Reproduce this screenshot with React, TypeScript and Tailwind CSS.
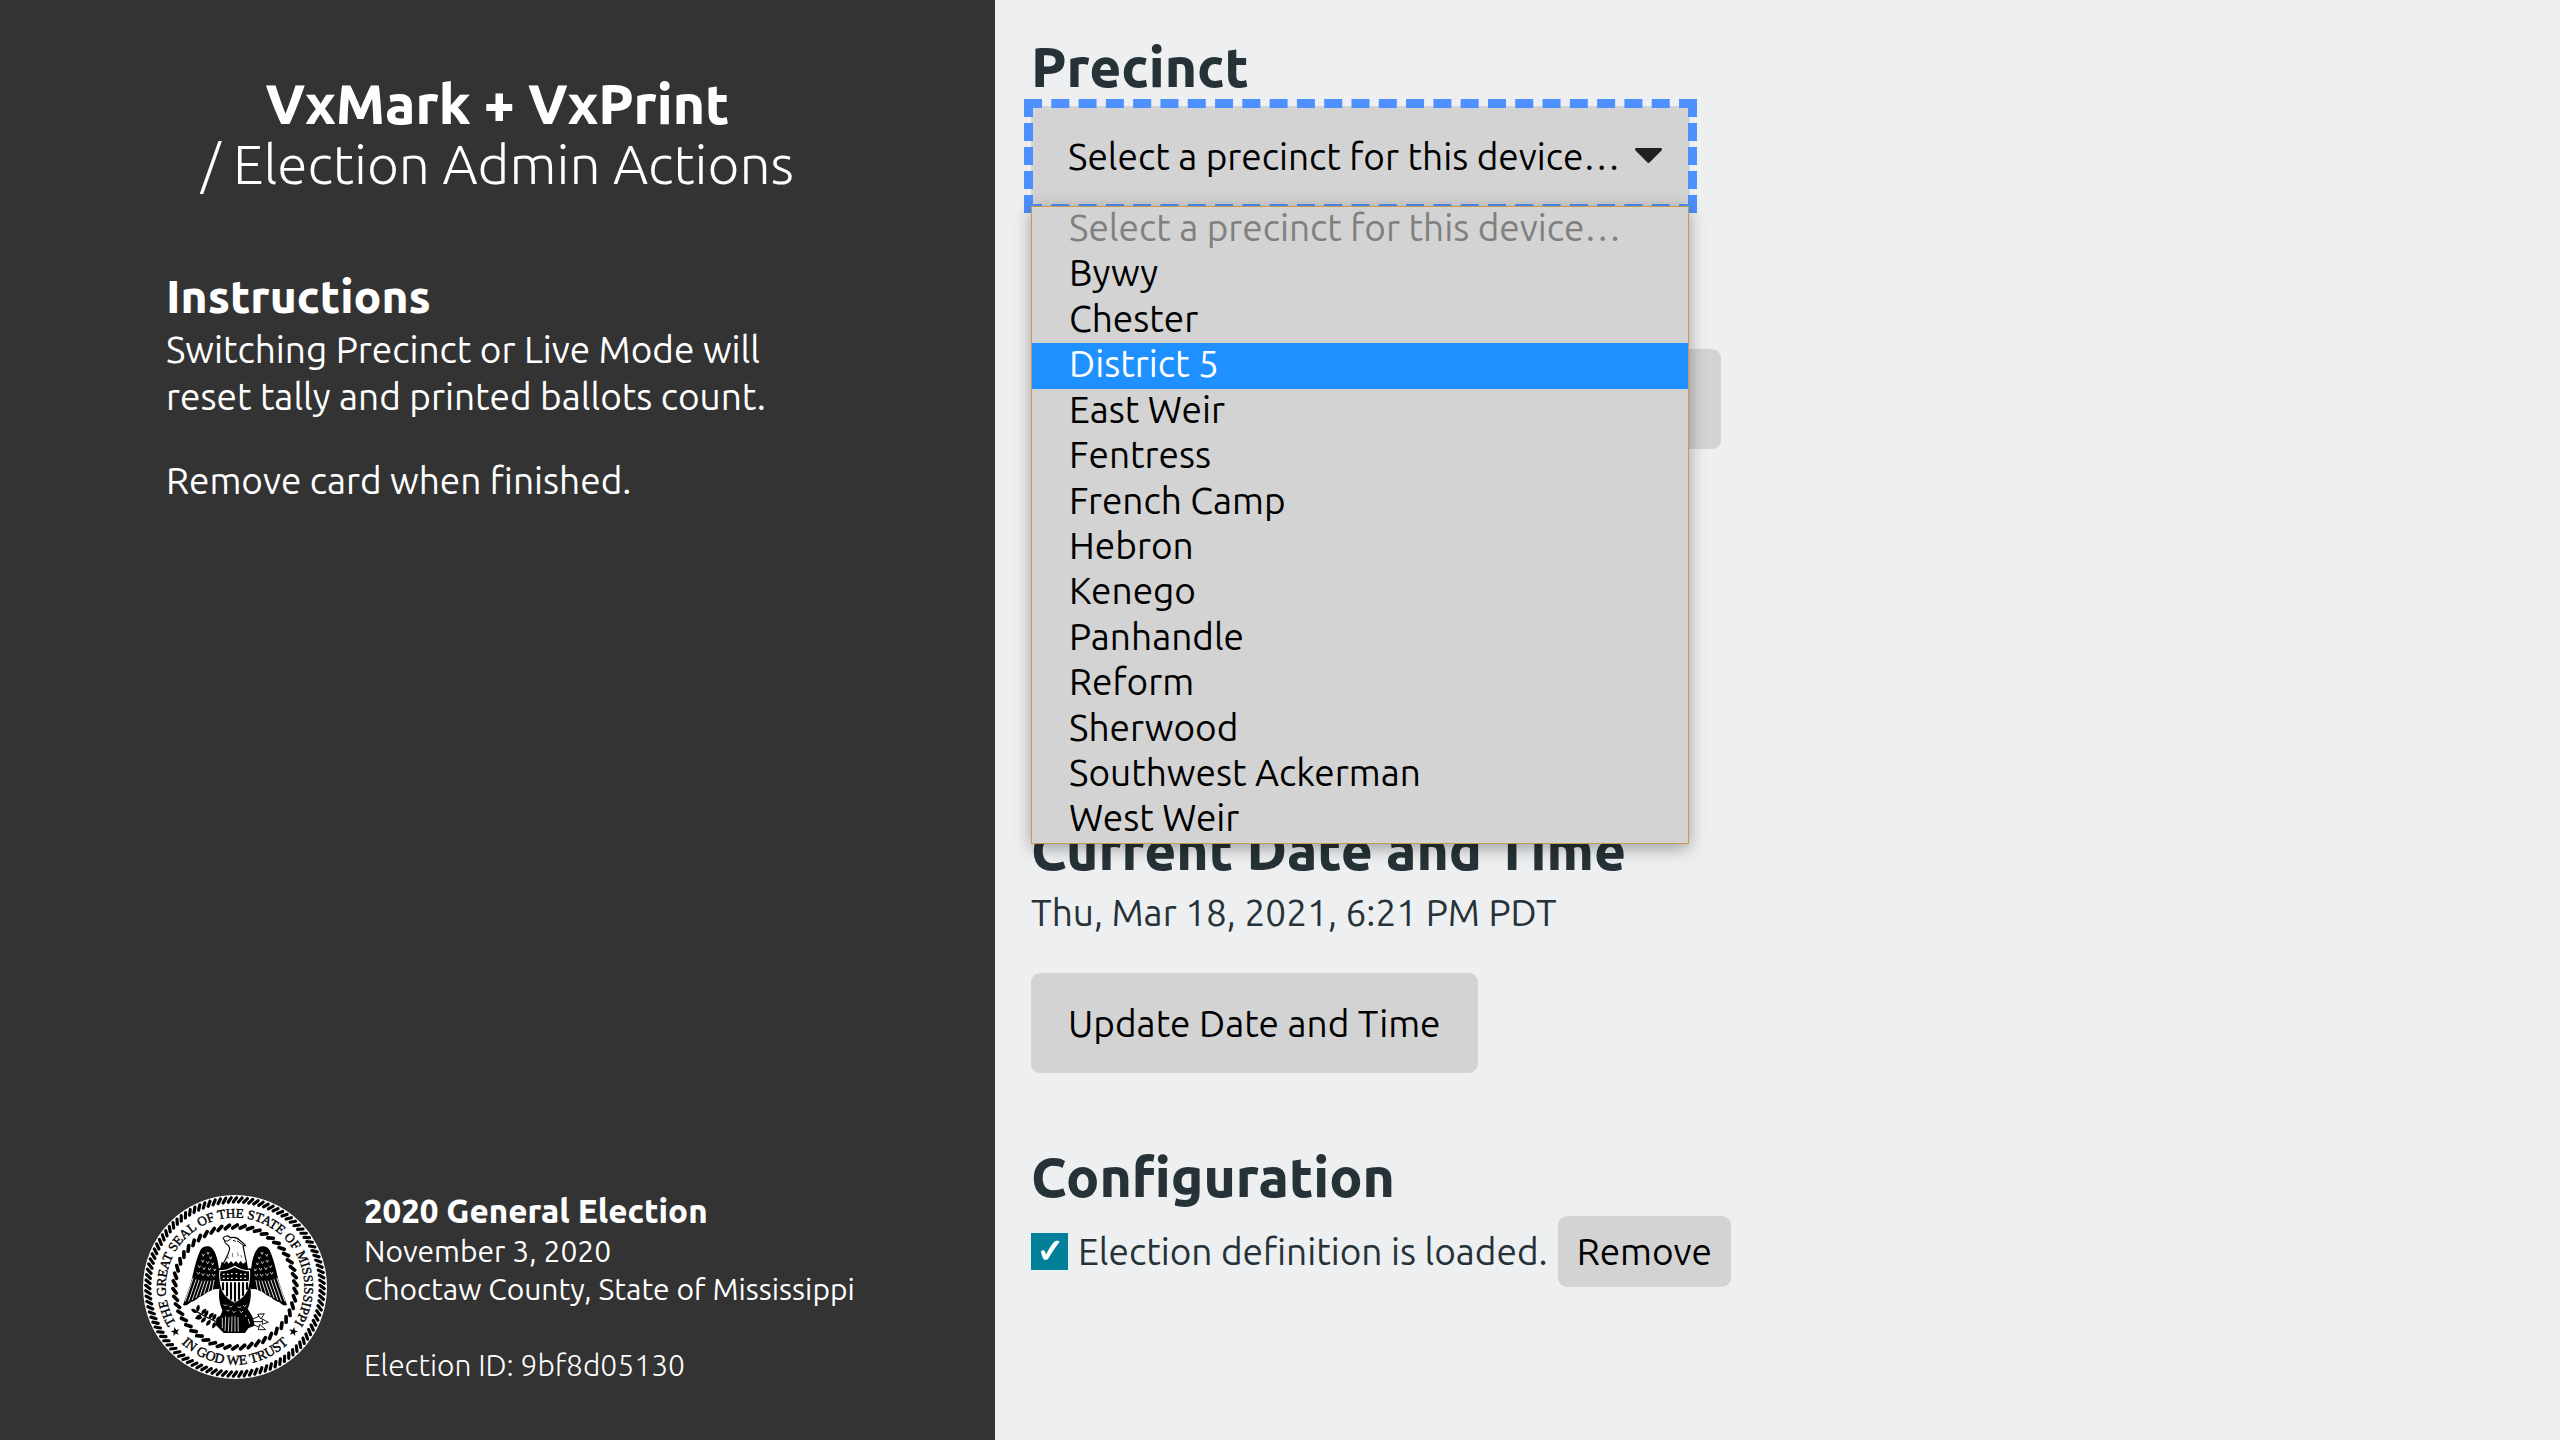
import { useState } from 'react';

const PLACEHOLDER = 'Select a precinct for this device…';

const PRECINCTS = [
  'Bywy',
  'Chester',
  'District 5',
  'East Weir',
  'Fentress',
  'French Camp',
  'Hebron',
  'Kenego',
  'Panhandle',
  'Reform',
  'Sherwood',
  'Southwest Ackerman',
  'West Weir',
];

const OUTER_ROPE = Array.from({ length: 104 }, (_, i) => (i * 360) / 104);
const INNER_ROPE = Array.from({ length: 50 }, (_, i) => (i * 360) / 50);
const STAR = 'M0-14 3.4-4.4 13.3-4.3 5.4 1.8 8.2 11.3 0 5.7-8.2 11.3-5.4 1.8-13.3-4.3-3.4-4.4Z';

function Wing() {
  return (
    <g>
      <path
        d="M-49-60C-52-88-60-108-70-118C-82-126-98-122-104-110C-116-84-122-56-130-22C-138 6-148 30-156 54C-148 58-140 52-132 45C-122 42-114 38-108 30C-98 28-90 22-84 16C-74 12-64 4-48 6L-42-4Z"
        fill="#000"
      />
      <g stroke="#fff" strokeWidth="2.6" fill="none" strokeLinecap="round">
        <path d="M-126-26-149 42M-117-22-139 42M-108-20-128 38M-99-18-117 32M-90-18-105 26M-81-18-93 20M-72-18-80 13M-63-20-68 8" />
        <path
          strokeWidth="2.2"
          d="M-98-98l3 6 3-6M-84-104l3 6 3-6M-76-90l3 6 3-6M-100-80l3 6 4-6M-86-76l4 6 3-6M-70-72l3 6 3-6M-110-64l3 6 4-5M-96-58l3 6 4-6M-80-56l3 6 4-6M-64-54l3 6 3-6M-114-44l4 6 4-6M-100-40l4 6 4-6M-84-38l4 6 4-6M-68-38l4 6 4-6"
        />
      </g>
    </g>
  );
}

function Leaf({ x, y, r }: { x: number; y: number; r: number }) {
  return <path d="M0 0C5-8 15-8 22 0C15 6 6 6 0 0Z" transform={`translate(${x} ${y}) rotate(${r})`} fill="#000" />;
}

function StateSeal() {
  return (
    <svg viewBox="-285 -285 570 570" className="size-[190px] shrink-0" role="img" aria-label="Great Seal of the State of Mississippi">
      <defs>
        <path id="seal-top" d="M0 208A208 208 0 0 1 0-208A208 208 0 0 1 0 208" />
        <path id="seal-bottom" d="M-233 0A233 233 0 0 0 233 0" />
      </defs>
      <circle r="276" fill="#fff" />
      <g stroke="#000" strokeLinecap="round">
        {OUTER_ROPE.map((a) => (
          <path key={a} d="M-5-255 5-268" strokeWidth="9.5" transform={`rotate(${a})`} />
        ))}
        {INNER_ROPE.map((a) => (
          <path key={a} d="M-7-177 7-186" strokeWidth="11" transform={`rotate(${a})`} />
        ))}
      </g>
      <g fontFamily='"Liberation Serif", serif' fill="#000" stroke="#000" strokeWidth="1.2" textAnchor="middle">
        <text fontSize="39.5">
          <textPath href="#seal-top" startOffset="50%">
            THE GREAT SEAL OF THE STATE OF MISSISSIPPI
          </textPath>
        </text>
        <text fontSize="41">
          <textPath href="#seal-bottom" startOffset="50%">
            IN GOD WE TRUST
          </textPath>
        </text>
      </g>
      <path d={STAR} transform="translate(-179 134) rotate(-12)" />
      <path d={STAR} transform="translate(175 134) rotate(12)" />

      <Wing />
      <g transform="scale(-1 1)">
        <Wing />
      </g>

      {/* body, legs and tail */}
      <path d="M-46 0 46 0C50 24 46 48 38 66C52 84 58 100 58 116L40 124 30 138H-34L-48 124-60 112C-50 96-40 82-38 70C-48 48-50 24-46 0Z" />
      <path
        d="M-38 92V124M-28 88-30 132M-18 90-20 134M-9 88-10 134M0 88V134M9 90 10 134M-34 52l5 5 5-5M-18 56l5 5 5-5M8 58l5 5 5-5M24 54l5 5 5-5M-26 68l5 5 5-5M-8 72l5 5 5-5M14 72l5 5 5-5M40 96l4 14M30 84l4 6"
        stroke="#fff"
        strokeWidth="2.4"
        fill="none"
      />

      {/* head and neck */}
      <path
        d="M-40-62C-30-80-18-98-16-116C-17-122-20-126-24-128C-29-130-31-134-31-139L-36-147C-30-154-20-156-14-148C-4-150 8-148 14-140C20-136 26-130 32-124L24-123C28-106 30-90 34-76L36-60Z"
        fill="#fff"
        stroke="#000"
        strokeWidth="3.4"
        strokeLinejoin="round"
      />
      <path d="M-32-139C-26-136-20-138-14-144M-6-140l8 3M6-138C12-136 18-130 26-124" stroke="#000" strokeWidth="3" fill="none" />
      <path d="M-40-76l8 6 6-8 7 8 7-8 7 8 8-8 7 8 7-8 7 8 10-6 6 26H-46Z" />
      <path d="M-22-92l2 8M-8-102l1 12M8-104l2 12M18-96l2 8" stroke="#000" strokeWidth="1.6" />

      {/* shield */}
      <path
        d="M-48-54C-36-50-22-54-1-66C20-54 34-50 46-54C50-38 46-22 45-10C42 18 24 38-1 50C-26 38-44 18-47-10C-48-22-52-38-48-54Z"
        fill="#fff"
        stroke="#000"
        strokeWidth="4"
      />
      <path d="M-43-48C-30-46-18-50-1-59C18-50 30-46 41-48C44-36 42-28 41-18H-43C-44-28-46-36-43-48Z" />
      <path
        d="M-36-38h5M-24-38h5M-12-40h5M2-40h5M15-38h5M28-38h5M-36-26h5M-24-26h5M-12-26h5M2-26h5M15-26h5M28-26h5"
        stroke="#fff"
        strokeWidth="4"
      />
      <path d="M-36-14V10M-24-14V28M-12-14V38M0-14V44M12-14V38M24-14V26M36-14V8" stroke="#000" strokeWidth="6.5" />

      {/* olive branch */}
      <path d="M-128 66C-100 84-76 96-48 108" stroke="#000" strokeWidth="4" fill="none" />
      <Leaf x={-112} y={76} r={205} />
      <Leaf x={-112} y={74} r={-80} />
      <Leaf x={-100} y={82} r={-50} />
      <Leaf x={-102} y={82} r={140} />
      <Leaf x={-90} y={90} r={-65} />
      <Leaf x={-88} y={90} r={130} />
      <Leaf x={-78} y={94} r={-50} />
      <Leaf x={-74} y={98} r={125} />
      <Leaf x={-66} y={100} r={-65} />
      <Leaf x={-60} y={104} r={110} />
      <Leaf x={-56} y={104} r={-50} />
      <Leaf x={-98} y={90} r={170} />

      {/* arrows */}
      <g fill="#fff" stroke="#000" strokeWidth="2.8" strokeLinejoin="round">
        <path d="M48 98 72 88M50 104 86 104M48 110 76 122" />
        <path d="M68 82 88 80 78 96ZM82 96 100 106 82 112ZM74 112 92 128 70 128Z" />
      </g>
    </svg>
  );
}

function Sidebar() {
  return (
    <aside className="flex w-[38.87%] shrink-0 flex-col justify-between bg-[#333333] pt-[74px] pb-14 text-white">
      <div>
        <h1 className="text-center text-[55px] leading-[60px] font-extrabold">
          VxMark + VxPrint
          <br />
          <span className="font-light">/ Election Admin Actions</span>
        </h1>
        <div className="mt-[74px] px-[166px] text-[37px] leading-[47px]">
          <h2 className="mb-0.5 text-[46px] leading-[56px] font-extrabold">Instructions</h2>
          <p>Switching Precinct or Live Mode will reset tally and printed ballots count.</p>
          <p className="mt-[37px]">Remove card when finished.</p>
        </div>
      </div>
      <footer className="flex items-start gap-[34px] pl-[140px] text-[30px] leading-[38px]">
        <StateSeal />
        <div>
          <p className="mb-0.5 text-[33px] font-extrabold">2020 General Election</p>
          <p>November 3, 2020</p>
          <p>Choctaw County, State of Mississippi</p>
          <p className="mt-[38px] font-light">Election ID: 9bf8d05130</p>
        </div>
      </footer>
    </aside>
  );
}

function PrecinctPicker() {
  const [precinct, setPrecinct] = useState('');
  const [active, setActive] = useState('District 5');

  return (
    <div className="relative w-[659px] outline-[9px] -outline-offset-2 outline-[#4d90fe] outline-dashed">
      <select
        aria-labelledby="precinct-heading"
        value={precinct}
        onChange={(e) => setPrecinct(e.target.value)}
        className="block h-[100px] w-full appearance-none rounded-[9px] bg-[#d3d3d3] pr-14 pl-[37px] text-black outline-none"
      >
        <option value="">{PLACEHOLDER}</option>
        {PRECINCTS.map((name) => (
          <option key={name}>{name}</option>
        ))}
      </select>
      <svg viewBox="0 0 27 15" className="pointer-events-none absolute top-[42px] right-7 h-[15px] w-[27px]" aria-hidden="true">
        <path d="M1.5 0H25.500C27 0 27.400 1.500 26.500 2.500L15 14C14 15.200 13 15.200 12 14L.5 2.500C-.4 1.500 0 0 1.500 0Z" fill="#231f20" />
      </svg>
      <ul
        role="listbox"
        aria-label="Precinct options"
        className="absolute top-full left-0 z-10 flex h-[638px] w-[658px] flex-col border border-[#c79c4b] bg-[#d3d3d3] leading-[41px] text-black shadow-[0_4px_16px_rgba(0,0,0,0.35)]"
      >
        <li role="option" aria-disabled="true" aria-selected="false" className="flex-1 px-[37px] text-[#808080]">
          {PLACEHOLDER}
        </li>
        {PRECINCTS.map((name) => (
          <li
            key={name}
            role="option"
            aria-selected={name === active}
            onMouseEnter={() => setActive(name)}
            onClick={() => setPrecinct(name)}
            className={name === active ? 'flex-1 bg-[#1e90ff] px-[37px] text-white' : 'flex-1 px-[37px]'}
          >
            {name}
          </li>
        ))}
      </ul>
    </div>
  );
}

export default function App() {
  const [loaded, setLoaded] = useState(true);

  return (
    <div className='flex min-h-screen bg-[#edeff0] font-["Ubuntu","Noto_Sans",sans-serif] text-[37px] leading-[47px] text-[#263238]'>
      <Sidebar />
      <main className="flex-1 px-9 pt-9">
        <section>
          <h2 id="precinct-heading" className="mb-2 text-[55px] leading-[62px] font-extrabold">
            Precinct
          </h2>
          <PrecinctPicker />
        </section>

        <section className="mt-[143px]">
          <button type="button" aria-label="Ballot mode" className="block h-[100px] w-[690px] rounded-[9px] bg-[#d3d3d3]" />
        </section>

        <section className="mt-[370px]">
          <h2 className="mb-2 text-[55px] leading-[62px] font-extrabold">Current Date and Time</h2>
          <p>Thu, Mar 18, 2021, 6:21 PM PDT</p>
          <button type="button" className="mt-[37px] block h-[100px] rounded-[9px] bg-[#d3d3d3] px-[37px] text-black">
            Update Date and Time
          </button>
        </section>

        <section className="mt-[73px]">
          <h2 className="mb-2 text-[55px] leading-[62px] font-extrabold">Configuration</h2>
          <div className="flex items-center gap-2.5">
            <label className="flex items-center gap-2.5">
              <span className="relative block size-[37px]">
                <input
                  type="checkbox"
                  checked={loaded}
                  onChange={(e) => setLoaded(e.target.checked)}
                  className="block size-full appearance-none bg-[#028099]"
                />
                {loaded && (
                  <svg viewBox="0 0 37 37" className="pointer-events-none absolute inset-0 size-full" aria-hidden="true">
                    <path
                      d="M10 18.500C10.500 16.800 13.500 16.800 14 18.500L15 21.500C17.500 16.500 20 12.500 23 9C24.200 7.600 27 7.400 28 8C28.500 8.400 28.400 9 28 9.600C24 15 20.500 20 17.500 25.200C16.200 27.400 13.200 27.400 12.200 25.400C11 23 10.300 21 10 18.500Z"
                      fill="#fff"
                    />
                  </svg>
                )}
              </span>
              Election definition is loaded.
            </label>
            <button type="button" onClick={() => setLoaded(false)} className="rounded-[9px] bg-[#d3d3d3] px-[19px] py-3 text-black">
              Remove
            </button>
          </div>
        </section>
      </main>
    </div>
  );
}
